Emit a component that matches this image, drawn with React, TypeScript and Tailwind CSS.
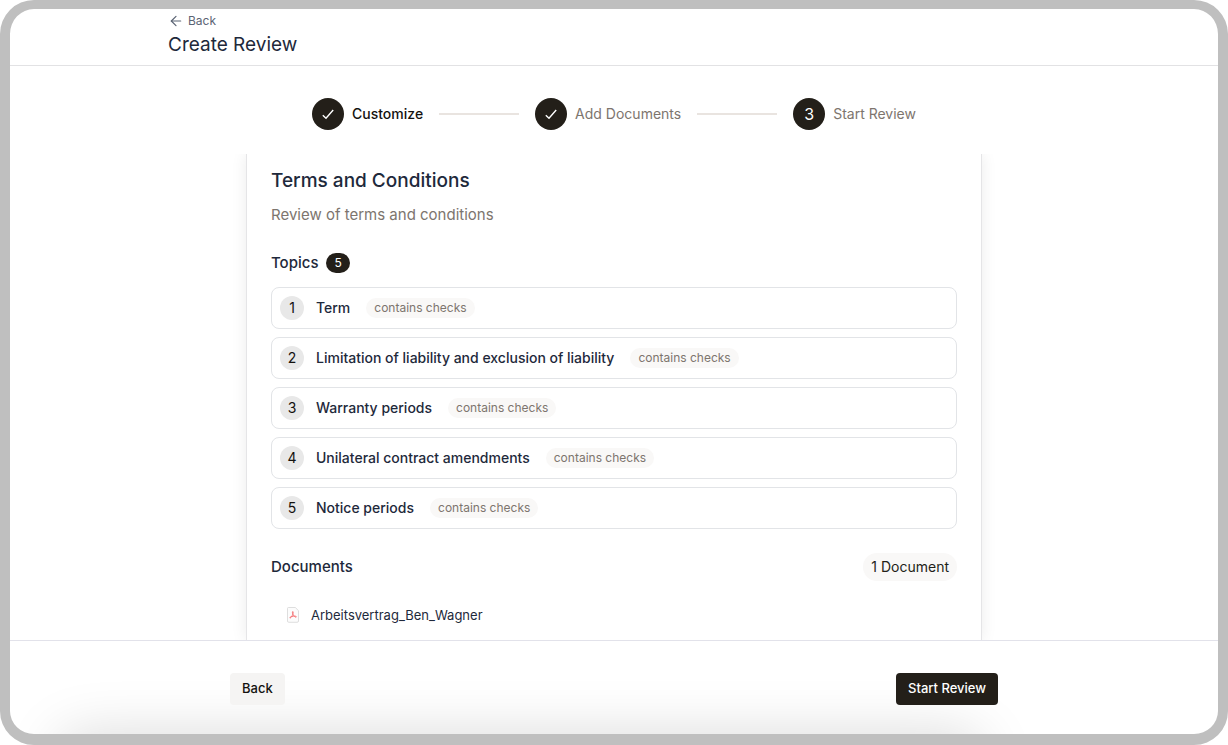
import { ArrowLeft } from 'lucide-react'
import type { ReactNode } from 'react'

const topics = [
	'Term',
	'Limitation of liability and exclusion of liability',
	'Warranty periods',
	'Unilateral contract amendments',
	'Notice periods',
]

const documents = ['Arbeitsvertrag_Ben_Wagner']

type StepProps = {
	label: string
	active?: boolean
	children: ReactNode
}

function Step({ label, active = false, children }: StepProps) {
	return (
		<li className="flex items-center gap-2">
			<span className="flex size-8 items-center justify-center rounded-full bg-[#231f19] text-base text-white">
				{children}
			</span>
			<span
				className={
					active
						? 'text-sm font-medium text-[#14120f]'
						: 'text-sm text-[#7d756e]'
				}
			>
				{label}
			</span>
		</li>
	)
}

function StepLine() {
	return <li aria-hidden="true" className="h-0.5 w-20 bg-[#e9e4e0]" />
}

function CheckIcon() {
	return (
		<svg
			viewBox="0 0 12 12"
			className="size-3"
			fill="none"
			stroke="currentColor"
			strokeWidth="1.4"
			aria-hidden="true"
		>
			<path d="M.8 7.2 4 10.2 11.2 2" />
		</svg>
	)
}

function PdfIcon() {
	return (
		<svg viewBox="0 0 12 16" className="h-4 w-3" fill="none" aria-hidden="true">
			<path
				d="M1.5.5h6.8l3.2 3.2v10.3a1.3 1.3 0 0 1-1.3 1.3H1.8A1.3 1.3 0 0 1 .5 14V1.5a1 1 0 0 1 1-1Z"
				fill="#fcfcfc"
				stroke="#d5d5d5"
				strokeWidth=".8"
			/>
			<path
				d="M5.9 4.6c-.8 0-.5 1.7.3 3.1.8 1.5 2.2 2.8 3 2.4.8-.6-1-1.3-3-.9-1.8.3-3.6 1-3.4 1.7.4.6 1.6-.7 2.4-2.3.8-1.7 1.4-4 .7-4Z"
				stroke="#f4696b"
				strokeWidth=".9"
			/>
		</svg>
	)
}

export default function App() {
	return (
		<div className="flex h-screen min-h-[600px] flex-col overflow-hidden rounded-[34px] border-x-[10px] border-t-[9px] border-b-[11px] border-[#bfbfbf] bg-white font-[Inter,sans-serif] text-[#1e293b]">
			<header className="shrink-0 border-b border-[#e2e2e4] pb-2">
				<div className="mx-auto flex max-w-[892px] flex-col">
					<a
						href="#"
						className="flex items-center gap-1 self-start text-xs leading-6 text-[#5b6474]"
					>
						<ArrowLeft className="size-4" strokeWidth={1.8} />
						Back
					</a>
					<h1 className="text-[19px] leading-6">Create Review</h1>
				</div>
			</header>

			<ol className="flex shrink-0 items-center justify-center gap-4 pt-8 pb-6">
				<Step label="Customize" active>
					<CheckIcon />
				</Step>
				<StepLine />
				<Step label="Add Documents">
					<CheckIcon />
				</Step>
				<StepLine />
				<Step label="Start Review">3</Step>
			</ol>

			<main className="min-h-0 grow overflow-hidden px-4">
				<div className="mx-auto min-h-full max-w-[736px] border-x border-[#e5e5e7] px-6 pt-[13px] shadow-[0_0_15px_rgba(0,0,0,0.08)]">
					<h2 className="text-[19px] leading-7 font-medium">
						Terms and Conditions
					</h2>
					<p className="pt-2 text-[15px] leading-6 text-[#7d756e]">
						Review of terms and conditions
					</p>

					<div className="flex items-center gap-2 pt-6">
						<h3 className="text-[15px] leading-6 font-medium">Topics</h3>
						<span className="rounded-full bg-[#231f19] px-2 text-xs leading-5 text-white">
							{topics.length}
						</span>
					</div>
					<ol className="flex flex-col gap-2 pt-3">
						{topics.map((topic, index) => (
							<li
								key={topic}
								className="flex h-[42px] items-center rounded-lg border border-[#e2e4e7] px-2"
							>
								<span className="flex size-6 items-center justify-center rounded-full bg-[#e8e8e8] text-sm text-[#14120f]">
									{index + 1}
								</span>
								<span className="pl-3 text-sm font-medium">{topic}</span>
								<span className="ml-4 rounded-full bg-[#f9f8f7] px-2 text-xs leading-5 text-[#7d756e]">
									contains checks
								</span>
							</li>
						))}
					</ol>

					<div className="flex items-center justify-between pt-6">
						<h3 className="text-[15px] font-medium">Documents</h3>
						<span className="rounded-full bg-[#f9f8f7] px-2 text-sm leading-7 text-[#231f19]">
							{documents.length} Document
						</span>
					</div>
					<ul className="px-4 pt-6">
						{documents.map(name => (
							<li
								key={name}
								className="flex items-center gap-3 text-[13px] leading-5"
							>
								<PdfIcon />
								{name}
							</li>
						))}
					</ul>
				</div>
			</main>

			<footer className="relative shrink-0 border-t border-[#e2e2ea] pt-8 pb-[29px]">
				{/* soft shade rising from the bottom edge */}
				<div
					aria-hidden="true"
					className="pointer-events-none absolute top-full right-[236px] left-12 h-16 rounded-3xl shadow-[0_0_56px_rgba(0,0,0,0.15)]"
				/>
				<div className="relative mx-auto flex max-w-[768px] justify-between">
					<button
						type="button"
						className="h-8 rounded bg-[#f5f4f3] px-3 text-[13px] font-medium text-[#14120f]"
					>
						Back
					</button>
					<button
						type="button"
						className="h-8 rounded bg-[#231f19] px-3 text-[13px] font-medium text-white"
					>
						Start Review
					</button>
				</div>
			</footer>
		</div>
	)
}
